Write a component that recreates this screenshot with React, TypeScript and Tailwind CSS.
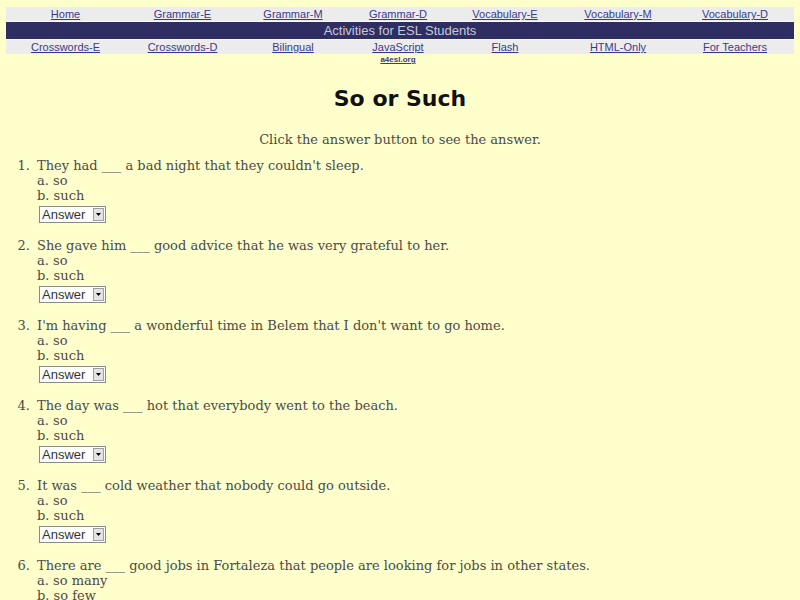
import React from 'react';

const topLinks = ['Home', 'Grammar-E', 'Grammar-M', 'Grammar-D', 'Vocabulary-E', 'Vocabulary-M', 'Vocabulary-D'];
const bottomLinks = ['Crosswords-E', 'Crosswords-D', 'Bilingual', 'JavaScript', 'Flash', 'HTML-Only', 'For Teachers'];

const questions = [
  { q: 'They had ___ a bad night that they couldn\'t sleep.', a: 'so', b: 'such' },
  { q: 'She gave him ___ good advice that he was very grateful to her.', a: 'so', b: 'such' },
  { q: 'I\'m having ___ a wonderful time in Belem that I don\'t want to go home.', a: 'so', b: 'such' },
  { q: 'The day was ___ hot that everybody went to the beach.', a: 'so', b: 'such' },
  { q: 'It was ___ cold weather that nobody could go outside.', a: 'so', b: 'such' },
  { q: 'There are ___ good jobs in Fortaleza that people are looking for jobs in other states.', a: 'so many', b: 'so few' },
];

const cols = 'grid grid-cols-[119px_115px_106px_104px_110px_116px_118px]';

const AnswerBox = () => (
  <div className="mt-[3px] ml-[2px] flex h-[17px] w-[67px] items-stretch border border-[#8a8a8a] bg-white font-['Liberation_Sans',sans-serif] text-[13px] leading-[15px] text-[#333]">
    <span className="flex-1 pl-[2px]">Answer</span>
    <span className="m-[1px] flex w-[11px] items-center justify-center border border-[#a0a0a0] bg-[#e4e4e4]">
      <svg width="5" height="3" viewBox="0 0 5 3"><path d="M0 0h5L2.5 3z" fill="#000" /></svg>
    </span>
  </div>
);

export default function App() {
  return (
    <div className="h-[600px] w-[800px] overflow-hidden bg-[#ffffcc] pt-[7px] font-['DejaVu_Serif',serif] text-[#4a4a4a]">
      <div className="mx-[6px] flex flex-col gap-[1px] font-['Liberation_Sans',sans-serif]">
        <div className={`${cols} h-[14px] bg-[#ececec] text-[11px] leading-[14px]`}>
          {topLinks.map((l) => (
            <a key={l} className="text-center text-[#3a3a8c] underline">{l}</a>
          ))}
        </div>
        <div className="h-[17px] bg-[#2e2e62] text-center text-[13px] leading-[17px] text-[#c9c9d9]">
          Activities for ESL Students
        </div>
        <div className={`${cols} h-[14px] bg-[#ececec] text-[11px] leading-[14px]`}>
          {bottomLinks.map((l) => (
            <a key={l} className="text-center text-[#3a3a8c] underline">{l}</a>
          ))}
        </div>
        <div className={cols}>
          <span />
          <span />
          <span />
          <a className="text-center text-[8px] leading-[10px] font-bold text-[#3a3a8c] underline">a4esl.org</a>
        </div>
      </div>

      <h1 className="mt-[19px] text-center font-['DejaVu_Sans',sans-serif] text-[22px] leading-[30px] font-bold text-[#111]">
        So or Such
      </h1>

      <p className="mt-[18px] text-center text-[13px] leading-[15px]">Click the answer button to see the answer.</p>

      <ol className="mt-[11px] text-[13px] leading-[15px]">
        {questions.map((item, i) => (
          <li key={i} className="mb-[15px] flex">
            <span className="w-[37px] shrink-0 pr-[7px] text-right">{i + 1}.</span>
            <div>
              <div>{item.q}</div>
              <div>a. {item.a}</div>
              <div>b. {item.b}</div>
              <AnswerBox />
            </div>
          </li>
        ))}
      </ol>
    </div>
  );
}
